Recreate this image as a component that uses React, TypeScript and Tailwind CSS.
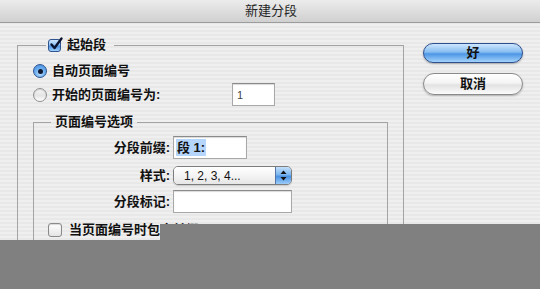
import React from "react";

function CheckedBox() {
  return (
    <span className="relative inline-block w-[13px] h-[13px] rounded-[3px] border border-[#2f5490] bg-[linear-gradient(to_bottom,#cfe6fc_0%,#8fc2f3_45%,#4b93e3_55%,#9fd0fa_100%)] shrink-0">
      <svg className="absolute left-[0px] top-[-3px] overflow-visible" width="14" height="14" viewBox="0 0 14 14">
        <path d="M2.5 7.5 L5.5 11 L12.5 1.5" fill="none" stroke="#0c1530" strokeWidth="2.4" strokeLinecap="round" strokeLinejoin="round" />
      </svg>
    </span>
  );
}

function EmptyBox() {
  return (
    <span className="inline-block w-[14px] h-[14px] rounded-[3px] border border-[#8a8a8a] bg-[linear-gradient(to_bottom,#ffffff_0%,#f2f2f2_50%,#e4e4e4_100%)] shadow-[inset_0_1px_1px_rgba(0,0,0,0.15)] shrink-0" />
  );
}

function Radio({ on }: { on?: boolean }) {
  if (on) {
    return (
      <span className="flex items-center justify-center w-[14px] h-[14px] rounded-full border border-[#2f5490] bg-[radial-gradient(circle_at_50%_70%,#bfe0fd_0%,#6fb0ef_45%,#3d86dc_100%)] shrink-0">
        <span className="w-[5px] h-[5px] rounded-full bg-[#0d1830]" />
      </span>
    );
  }
  return (
    <span className="inline-block w-[14px] h-[14px] rounded-full border border-[#8f8f8f] bg-[linear-gradient(to_bottom,#f6f6f6_0%,#e4e4e4_55%,#ffffff_100%)] shadow-[inset_0_1px_1px_rgba(0,0,0,0.15)] shrink-0" />
  );
}

export default function App() {
  return (
    <div className="relative w-[540px] h-[289px] overflow-hidden bg-[repeating-linear-gradient(to_bottom,#efefef_0px,#efefef_2px,#e8e8e8_2px,#e8e8e8_4px)] font-['Liberation_Sans','Noto_Sans_CJK_SC',sans-serif] text-[13px] leading-[16px] text-[#111]">
      <div className="h-[23px] flex items-center justify-center border-b border-[#9c9c9c] bg-[linear-gradient(to_bottom,#ececec,#d0d0d0)] text-[13px] text-[#262626] pl-[2px]">
        新建分段
      </div>
      <div className="flex pl-[17px] pt-[14px]">
        <fieldset className="w-[387px] border border-[#a4a4a4] px-[15px] pb-[40px]">
          <legend className="ml-[13px] pl-[2px] pr-[8px] h-[16px] flex items-center gap-[6px]">
            <CheckedBox />
            <span className="font-semibold">起始段</span>
          </legend>
          <div className="mt-[9px] h-[18px] flex items-center gap-[5px]">
            <Radio on />
            <span className="font-semibold">自动页面编号</span>
          </div>
          <div className="mt-[3px] h-[23px] flex items-center">
            <Radio />
            <span className="ml-[5px] w-[180px] font-semibold">开始的页面编号为:</span>
            <div className="w-[43px] h-[23px] bg-white border border-[#a8a8a8] border-t-[#8a8a8a] shadow-[inset_0_1px_1px_rgba(0,0,0,0.15)] flex items-center pl-[4px] text-[11px] text-[#444]">
              1
            </div>
          </div>
          <fieldset className="mt-[8px] border border-[#a4a4a4] pb-[40px]">
            <legend className="ml-[17px] px-[4px] h-[16px] font-semibold">页面编号选项</legend>
            <div className="mt-[6px] h-[23px] flex items-center">
              <span className="w-[136px] text-right font-semibold">分段前缀:</span>
              <div className="ml-[3px] w-[74px] h-[23px] bg-white border border-[#a8a8a8] border-t-[#8a8a8a] shadow-[inset_0_1px_1px_rgba(0,0,0,0.15)] flex items-center pl-[2px]">
                <span className="bg-[#b5d5fa] leading-[17px] px-[1px] font-semibold">段 1:</span>
              </div>
            </div>
            <div className="mt-[7px] h-[19px] flex items-center">
              <span className="w-[136px] text-right font-semibold">样式:</span>
              <div className="ml-[3px] w-[119px] h-[19px] flex rounded-[5px] border border-[#7d7d7d] overflow-hidden shadow-[0_1px_1px_rgba(0,0,0,0.15)]">
                <div className="flex-1 flex items-center pl-[10px] bg-[linear-gradient(to_bottom,#ffffff_0%,#f4f4f4_50%,#e6e6e6_100%)] text-[12px] text-[#111]">
                  1, 2, 3, 4...
                </div>
                <div className="w-[16px] flex items-center justify-center border-l border-[#5574a8] bg-[linear-gradient(to_bottom,#c4e0fb_0%,#7bb5ef_45%,#4a91e2_55%,#9ccdf9_100%)]">
                  <svg width="7" height="11" viewBox="0 0 7 11">
                    <path d="M3.5 0.5 L6.5 4 L0.5 4 Z" fill="#111" />
                    <path d="M3.5 10.5 L6.5 7 L0.5 7 Z" fill="#111" />
                  </svg>
                </div>
              </div>
            </div>
            <div className="mt-[5px] h-[23px] flex items-center">
              <span className="w-[136px] text-right font-semibold">分段标记:</span>
              <div className="ml-[3px] w-[119px] h-[23px] bg-white border border-[#a8a8a8] border-t-[#8a8a8a] shadow-[inset_0_1px_1px_rgba(0,0,0,0.15)]" />
            </div>
            <div className="mt-[10px] ml-[14px] h-[14px] flex items-center gap-[7px]">
              <EmptyBox />
              <span className="font-semibold">当页面编号时包含前缀</span>
            </div>
          </fieldset>
        </fieldset>
        <div className="ml-[19px] mt-[6px] w-[100px] flex flex-col gap-[10px]">
          <div className="h-[20px] rounded-full border border-[#2d4f8e] bg-[linear-gradient(to_bottom,#cfe6fd_0%,#86bdf2_45%,#4c95e5_55%,#a4d3fb_100%)] shadow-[0_1px_2px_rgba(0,0,0,0.3)] flex items-center justify-center font-semibold text-[#111]">
            好
          </div>
          <div className="h-[22px] rounded-full border border-[#8a8a8a] bg-[linear-gradient(to_bottom,#ffffff_0%,#f4f4f4_45%,#e2e2e2_55%,#fbfbfb_100%)] shadow-[0_1px_2px_rgba(0,0,0,0.25)] flex items-center justify-center font-semibold text-[#111]">
            取消
          </div>
        </div>
      </div>
      <div className="absolute left-[160px] top-[224px] right-0 bottom-0 bg-[#808080]" />
      <div className="absolute left-0 top-[240px] right-0 bottom-0 bg-[#808080]" />
    </div>
  );
}
